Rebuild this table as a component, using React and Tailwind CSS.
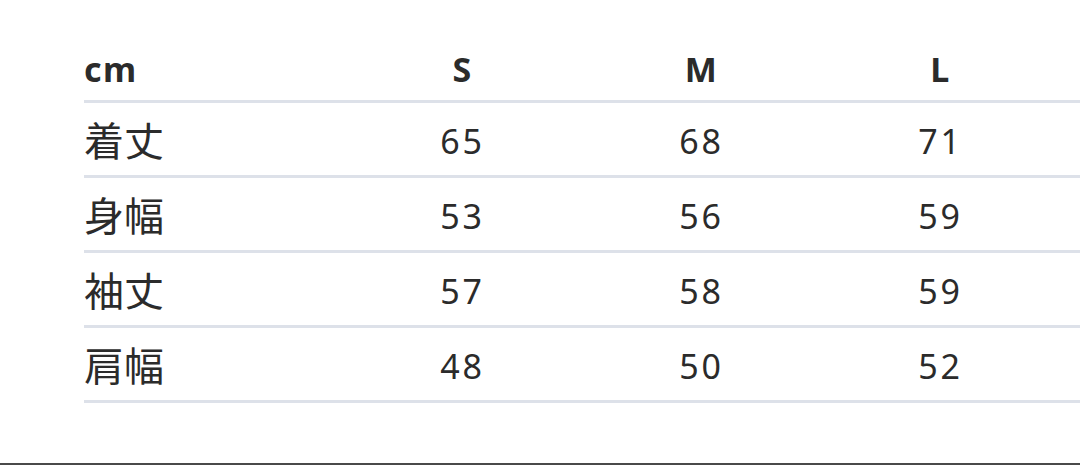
const sizes = ["S", "M", "L"];

const rows = [
  { label: "着丈", values: [65, 68, 71] },
  { label: "身幅", values: [53, 56, 59] },
  { label: "袖丈", values: [57, 58, 59] },
  { label: "肩幅", values: [48, 50, 52] },
];

const font = {
  fontFamily: '"Noto Sans", "Noto Sans CJK JP", sans-serif',
};

export default function App() {
  return (
    <div className="w-[1080px] h-[465px] bg-white flex flex-col overflow-hidden" style={font}>
      <div className="flex-1 pl-[84px] pt-[43px]">
        {/* header */}
        <div className="grid grid-cols-[259px_239px_239px_239px] h-[60px] pb-[5px] items-center border-b-[3px] border-[#dde1e9] text-[#2b2b2b] font-bold text-[34px] tracking-[0.04em]">
          <div className="leading-none">cm</div>
          {sizes.map((s) => (
            <div key={s} className="text-center leading-none">
              {s}
            </div>
          ))}
        </div>
        {rows.map((r) => (
          <div
            key={r.label}
            className="grid grid-cols-[259px_239px_239px_239px] h-[75px] items-center border-b-[3px] border-[#dde1e9] text-[#2b2b2b]"
          >
            <div className="text-[40px] leading-none pt-[3px]">{r.label}</div>
            {r.values.map((v, i) => (
              <div key={i} className="text-center text-[34px] tracking-[0.08em] leading-none pt-[3px]">
                {v}
              </div>
            ))}
          </div>
        ))}
      </div>
      <div className="h-[2px] bg-[#4a4a4a]" />
    </div>
  );
}
